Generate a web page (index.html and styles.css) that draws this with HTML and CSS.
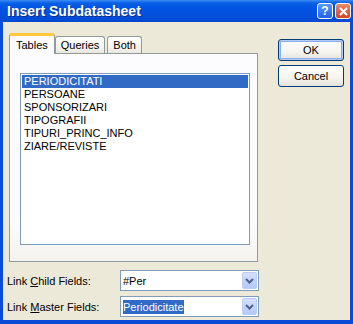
FILE: index.html
```html
<!DOCTYPE html>
<html lang="en">
<head>
  <meta charset="UTF-8">
  <title>Insert Subdatasheet</title>
  <link rel="stylesheet" href="styles.css">
</head>
<body>
  <div class="window">
    <div class="titlebar">
      <span class="title">Insert Subdatasheet</span>
      <div class="caption-btns">
        <span class="cap-btn help">?</span>
        <span class="cap-btn close">
          <svg width="9" height="9" viewBox="0 0 9 9"><path d="M1 1 L8 8 M8 1 L1 8" stroke="#fff" stroke-width="2"/></svg>
        </span>
      </div>
    </div>
    <div class="client">
      <div class="left">
        <div class="tabs">
          <span class="tab active">Tables</span>
          <span class="tab">Queries</span>
          <span class="tab">Both</span>
        </div>
        <div class="panel">
          <ul class="listbox">
            <li class="selected">PERIODICITATI</li>
            <li>PERSOANE</li>
            <li>SPONSORIZARI</li>
            <li>TIPOGRAFII</li>
            <li>TIPURI_PRINC_INFO</li>
            <li>ZIARE/REVISTE</li>
          </ul>
        </div>
        <div class="field">
          <label>Link <u>C</u>hild Fields:</label>
          <div class="combo">
            <span class="combo-text">#Per</span>
            <span class="combo-arrow"><svg width="9" height="6" viewBox="0 0 9 6"><path d="M1 1 L4.5 4.5 L8 1" stroke="#4d6185" stroke-width="2" fill="none"/></svg></span>
          </div>
        </div>
        <div class="field">
          <label>Link <u>M</u>aster Fields:</label>
          <div class="combo">
            <span class="combo-text"><span class="sel">Periodicitate</span></span>
            <span class="combo-arrow"><svg width="9" height="6" viewBox="0 0 9 6"><path d="M1 1 L4.5 4.5 L8 1" stroke="#4d6185" stroke-width="2" fill="none"/></svg></span>
          </div>
        </div>
      </div>
      <div class="right">
        <button class="btn default">OK</button>
        <button class="btn">Cancel</button>
      </div>
    </div>
  </div>
</body>
</html>
```

FILE: styles.css
```css
body {
  margin: 0;
  font-family: "Liberation Sans", Arial, sans-serif;
  font-size: 11px;
  background: #fff;
}
.window {
  width: 353px;
  height: 324px;
  background: #0a4bd8;
  display: flex;
  flex-direction: column;
}
.titlebar {
  height: 22px;
  display: flex;
  align-items: center;
  justify-content: space-between;
  padding: 0 2px 0 7px;
  background: linear-gradient(#3d8cf5 0, #0a5fe6 3px, #0054e3 8px, #0450dc 16px, #0448d0 22px);
}
.title {
  color: #fff;
  font-weight: bold;
  font-size: 14px;
  text-shadow: 1px 1px 0 #0a2a8a;
}
.caption-btns {
  display: flex;
  gap: 2px;
}
.cap-btn {
  width: 16px;
  height: 16px;
  border: 1px solid #fff;
  border-radius: 3px;
  box-sizing: border-box;
  display: flex;
  align-items: center;
  justify-content: center;
  color: #fff;
  font-weight: bold;
  font-size: 12px;
}
.help {
  background: linear-gradient(#5d96f6, #2160e6);
}
.close {
  background: linear-gradient(#e98b6c, #d2431f);
}
.client {
  flex: 1;
  margin: 0 3px 4px 3px;
  background: #ece9d8;
  display: flex;
  padding: 11px 0 0 4px;
}
.left {
  width: 256px;
}
.tabs {
  display: flex;
  align-items: flex-end;
  margin-left: 2px;
  height: 20px;
  position: relative;
  z-index: 1;
}
.tab {
  height: 17px;
  box-sizing: border-box;
  border: 1px solid #919b9c;
  border-bottom: none;
  border-radius: 3px 3px 0 0;
  padding: 2px 5px 0;
  background: linear-gradient(#fff, #f3f2ed 70%, #e7e6df);
  color: #000;
  margin-right: 2px;
}
.tab.active {
  height: 21px;
  margin-bottom: -1px;
  padding: 3px 6px 0;
  background: #fcfcfe;
  border-top: 3px solid #ffc83c;
  margin-right: 0;
}
.panel {
  margin-left: 2px;
  width: 249px;
  height: 209px;
  box-sizing: border-box;
  border: 1px solid #919b9c;
  background: linear-gradient(#fcfcfe 80%, #f4f3ee);
  padding: 19px 0 0 10px;
}
.listbox {
  list-style: none;
  margin: 0;
  width: 230px;
  height: 172px;
  box-sizing: border-box;
  border: 1px solid #7f9db9;
  background: #fff;
  padding: 1px;
}
.listbox li {
  height: 13px;
  line-height: 13px;
  padding-left: 2px;
}
.listbox li.selected {
  background: #316ac5;
  color: #fff;
}
.field {
  display: flex;
  align-items: center;
  margin-top: 8px;
}
.field + .field {
  margin-top: 5px;
}
.field label {
  width: 113px;
}
.combo {
  width: 139px;
  height: 21px;
  box-sizing: border-box;
  border: 1px solid #7f9db9;
  background: #fff;
  display: flex;
  align-items: center;
  justify-content: space-between;
  padding: 0 1px;
}
.combo-text {
  padding-left: 1px;
}
.sel {
  background: #316ac5;
  color: #fff;
  padding: 1px 0;
}
.combo-arrow {
  width: 15px;
  height: 17px;
  box-sizing: border-box;
  border: 1px solid #b9cdf6;
  border-radius: 2px;
  background: linear-gradient(#d4e1fd, #b5c9f7);
  display: flex;
  align-items: center;
  justify-content: center;
}
.right {
  display: flex;
  flex-direction: column;
  gap: 4px;
  margin: 6px 0 0 15px;
}
.btn {
  width: 66px;
  height: 22px;
  font-family: "Liberation Sans", Arial, sans-serif;
  font-size: 11px;
  border: 1px solid #003c74;
  border-radius: 3px;
  background: linear-gradient(#fff, #f5f4ef 60%, #e3e2da);
  padding: 0;
}
.btn.default {
  box-shadow: inset 0 0 0 1px #b6cbf5, inset 0 0 0 2px #89adf0;
}
```
